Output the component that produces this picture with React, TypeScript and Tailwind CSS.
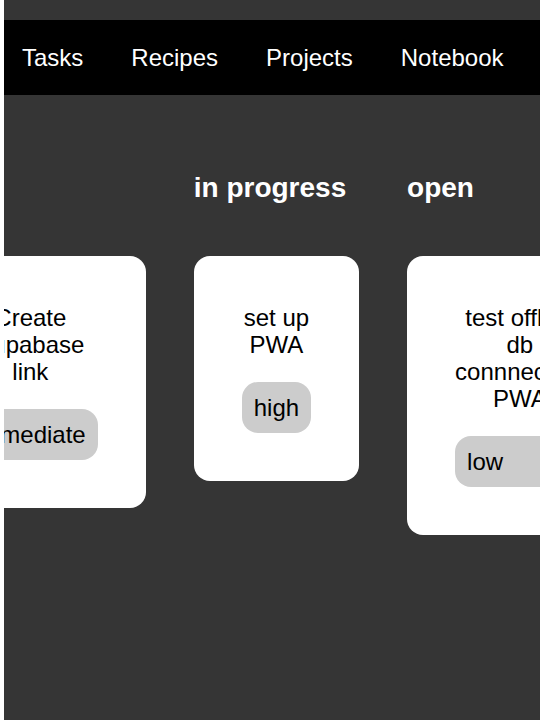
const links = ['Tasks', 'Recipes', 'Projects', 'Notebook'];

const columns = [
  { status: '', title: 'Create Supabase link', priority: 'immediate' },
  { status: 'in progress', title: 'set up PWA', priority: 'high' },
  { status: 'open', title: 'test offline db connnection PWA', priority: 'low' },
];

function TaskCard({ title, priority }: { title: string; priority: string }) {
  return (
    <article className="flex w-min flex-col gap-6 rounded-2xl bg-white p-12 text-black">
      <p className="text-center">{title}</p>
      <div className="rounded-2xl bg-[#cccccc] p-3">{priority}</div>
    </article>
  );
}

export default function App() {
  return (
    <div className="min-h-screen bg-white pl-1 font-['Liberation_Sans',Arial,sans-serif] text-[24px] leading-[27px]">
      <div className="min-h-screen overflow-hidden bg-[#353535] pt-5">
        <nav className="flex gap-12 bg-black py-6 pl-[18px] text-white">
          {links.map((name) => (
            <a key={name} href="#" className="shrink-0">
              {name}
            </a>
          ))}
        </nav>
        <main className="-ml-[89px] flex w-max items-start gap-12 pt-[77px]">
          {columns.map((column) => (
            <section key={column.title} className="flex flex-col gap-[52px]">
              <h2 className="h-8 text-[28px] leading-8 font-bold text-white">{column.status}</h2>
              <TaskCard title={column.title} priority={column.priority} />
            </section>
          ))}
        </main>
      </div>
    </div>
  );
}
